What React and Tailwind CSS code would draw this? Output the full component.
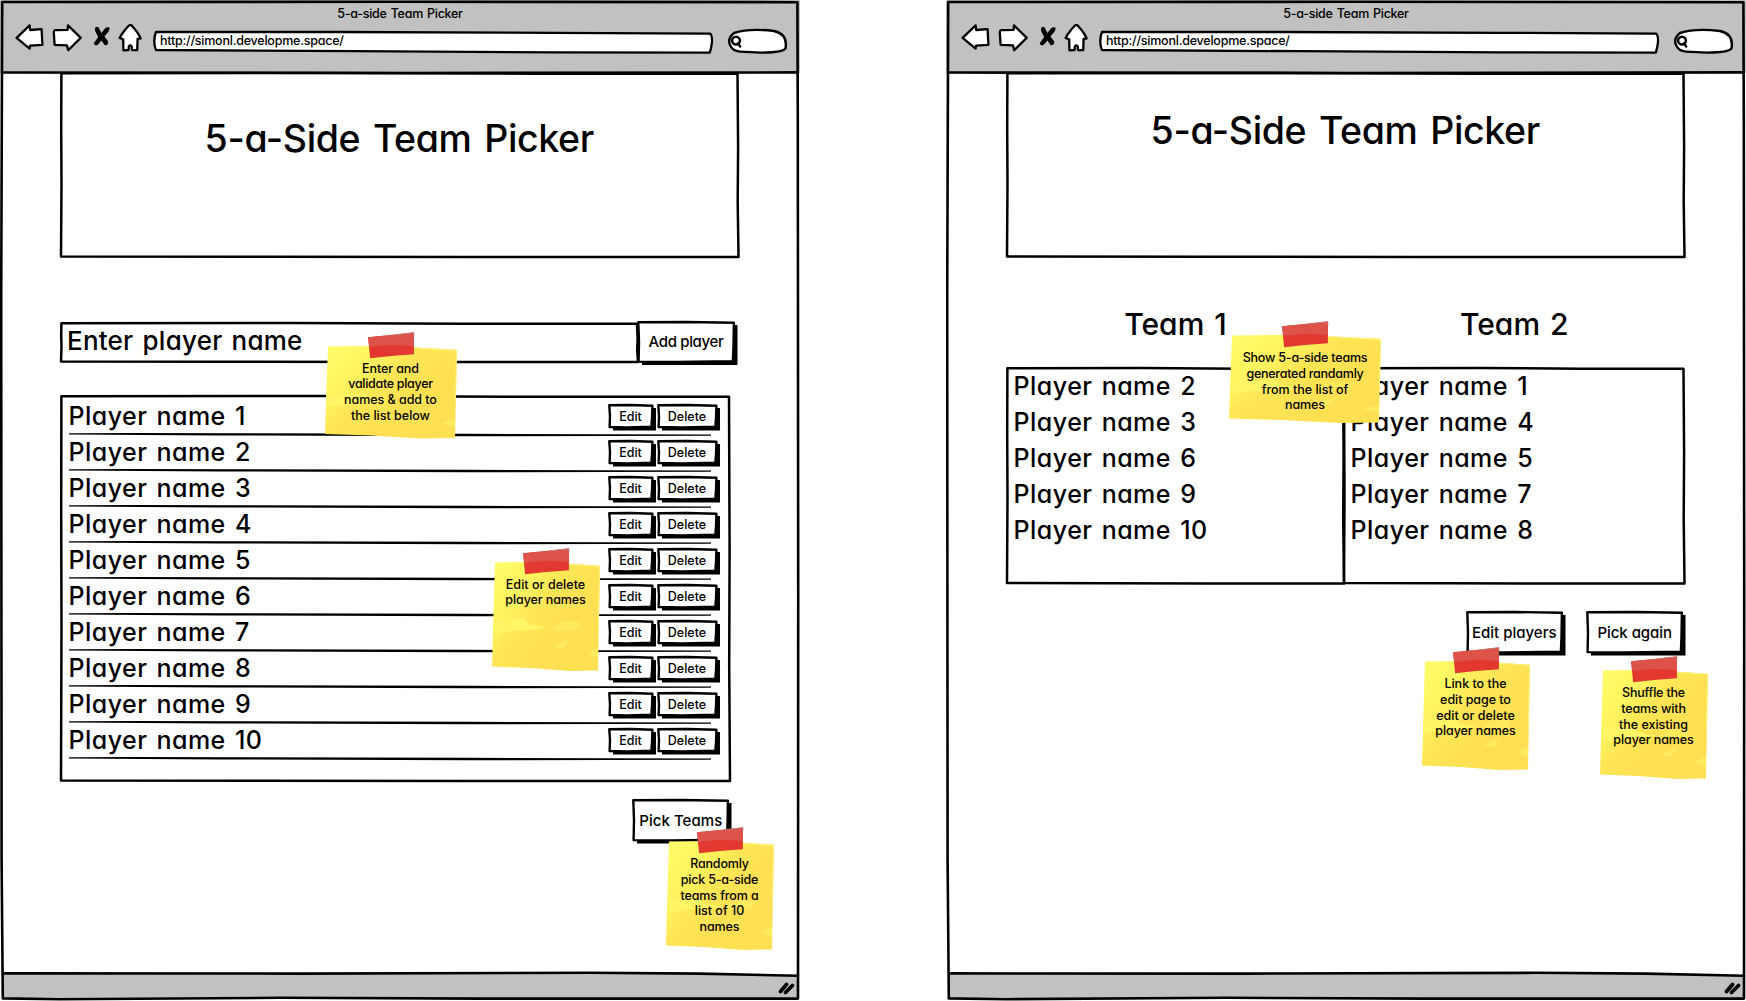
const ink = { fill: "none", stroke: "#000", strokeLinejoin: "round", strokeLinecap: "round" };

/* Hand-drawn frame: four slightly wavering strokes around its parent. */
function Sketch({ w, h, fill = "none", sw = 2.5 }) {
  return (
    <svg className="pointer-events-none absolute inset-0 overflow-visible" width={w} height={h} aria-hidden="true">
      <path
        {...ink}
        fill={fill}
        strokeWidth={sw}
        d={`M0.4 0.2 L${w * 0.4} 0 L${w * 0.7} 0.7 L${w - 1} 0.7 L${w - 0.4} ${h * 0.4} L${w - 0.8} ${h * 0.7} L${w} ${h} L${w * 0.6} ${h} L${w * 0.3} ${h - 0.2} L0 ${h - 0.6} L0.5 ${h * 0.6} L0.2 ${h * 0.3} Z`}
      />
    </svg>
  );
}

function Button({ children, w, h, dx = 3, dy = 3, className }) {
  return (
    <button className={`relative shrink-0 whitespace-nowrap text-center font-medium ${className}`}>
      <svg className="absolute inset-0 overflow-visible" width={w} height={h} aria-hidden="true">
        <path d={`M${dx + 1} ${dy} H${w + dx} V${h + dy} H${dx + 1} Z`} fill="#000" />
        <path
          d={`M0.3 0.3 L${w * 0.5} 0 L${w - 0.6} 0.8 L${w - 1} ${h * 0.6} L${w - 1.6} ${h - 0.8} L${w * 0.4} ${h} L0.6 ${h - 0.4} L1 ${h * 0.5} Z`}
          fill="#fff"
          stroke="#000"
          strokeWidth="2.4"
          strokeLinejoin="round"
        />
      </svg>
      <span className="relative">{children}</span>
    </button>
  );
}

function Browser({ children }) {
  return (
    <section className="relative flex h-[1001px] w-[800px] shrink-0 flex-col">
      <header className="flex h-[73px] shrink-0 flex-col bg-[#c1c1c1] pt-[3.5px]">
        <div className="h-5 text-center text-[12.5px]/5 font-medium tracking-[-0.27px] [word-spacing:1px]">5-a-side Team Picker</div>
        <div className="flex h-[31px] items-start pl-[15px]">
          <svg width="30" height="30" viewBox="0 0 30 30">
            <path {...ink} fill="#fff" strokeWidth="2.3" d="M1.6 13.8 L14.6 1.4 L15.2 6 L26.6 5.2 L27.4 20.8 L15 21.6 L14.6 24.6 Z" />
          </svg>
          <svg width="32" height="30" viewBox="0 0 32 30" className="ml-[6px]">
            <path {...ink} fill="#fff" strokeWidth="2.3" d="M2.8 8.4 C2.8 6 4 6 6 6.2 L16.6 5.8 L17 1.4 L29.8 13.8 L17.2 26.2 L16 21.4 L3.6 20.8 Z" />
          </svg>
          <svg width="18" height="30" viewBox="0 0 18 30" className="ml-[10px]">
            <path fill="#000" d="M2.4 3.6 C4 2 6 3 6.6 5.6 L8.4 9 L12 4.6 C13.4 3 16 3 16.8 4 L15.6 7.4 L11.4 12.4 L15 17.2 C16 19.6 13.6 21.8 11.6 21 L8.4 16.6 L4.8 20.8 C3 22 1 21 .8 19.2 L5.2 13 L2.6 8 C1.8 6.4 1.8 4.6 2.4 3.6 Z" />
          </svg>
          <svg width="26" height="30" viewBox="0 0 26 30" className="ml-[7px]">
            <path {...ink} fill="#fff" strokeWidth="2.3" d="M12 0.8 C10 2 4 9 1.6 14 L5.2 15.4 L5.4 26.4 L10.6 26 L10.8 22.6 C11.4 20.8 13.4 21 13.8 22.8 L14 26 L19.2 26.2 L19.6 15 L22.6 14.4 C21 10 16 4 13.4 1.2 Z" />
          </svg>
          <div className="relative ml-[10px] mt-[7px] h-5 w-[559px] pl-[6px] text-[12.5px]/[19px] font-medium tracking-[-0.23px]">
            <svg className="absolute inset-0 overflow-visible" width="559" height="20" aria-hidden="true">
              <path {...ink} fill="#fff" strokeWidth="2.3" d="M2 1 L180 1 L400 1.8 L556.4 2.6 C559 6 558 14 555.8 21.6 L400 21.4 L200 20.2 L2 19 C-.4 14 -.2 6 2 1 Z" />
            </svg>
            <span className="relative">http://simonl.developme.space/</span>
          </div>
          <svg width="62" height="30" viewBox="0 0 62 30" className="ml-[12.5px] mt-[3px]">
            <path {...ink} fill="#fff" strokeWidth="2.4" d="M8 6 C20 2 36 2.6 48 4 C57 6 61 12 59.6 21 C58 25 44 25.6 35 25.6 L14 24.6 C4 24 -1 13 8 6 Z" />
            <circle cx="10" cy="13.6" r="3.9" fill="none" stroke="#000" strokeWidth="2.5" />
            <path {...ink} strokeWidth="2.5" d="M12 16.4 L14.2 19.4" />
          </svg>
        </div>
      </header>
      <main className="ml-[61px] flex w-[677.5px] grow flex-col self-start">{children}</main>
      <svg className="pointer-events-none absolute inset-0" width="800" height="1001" aria-hidden="true">
        <path d="M3 973.4 L300 973 L590 972.8 L700 973.5 L798 975.8 V998.5 H3 Z" fill="#c1c1c1" />
        <path {...ink} strokeWidth="2.6" d="M2.2 2 L400 1.8 L797.4 2.2 L797.8 120 L798.2 600 L798 998.6 L480 998.6 L280 997.8 L60 999.2 L2.8 998.4 L1.6 860 L1.2 300 Z" />
        <path {...ink} strokeWidth="2.6" d="M3 72.5 L400 73 L797 72.4" />
        <path {...ink} strokeWidth="2.6" d="M3 973.4 L300 973.6 L590 972.8 L700 973.6 L798 975.8" />
        <path {...ink} strokeWidth="3.8" d="M780.5 991.5 L786.5 984.5 M785.5 992.5 L792.5 985.5" />
      </svg>
    </section>
  );
}

function Banner({ className }) {
  return (
    <div className={`relative h-[184px] w-[677.5px] shrink-0 text-center text-[37.5px]/[48px] font-[450] tracking-[-0.35px] [word-spacing:3px] ${className}`}>
      <Sketch w={677.5} h={184} />
      <h1 className="-ml-px">5-a-Side Team Picker</h1>
    </div>
  );
}

/* Yellow paper note held by a strip of red tape. */
function Note({ id, w, h, lines, className }) {
  const c = w / 2 + 0.1;
  return (
    <aside className={`absolute pt-[15px] text-center text-[12.5px]/[15.75px] font-medium ${className}`}>
      <svg className="absolute inset-0 overflow-visible" width={w} height={h} aria-hidden="true">
        <defs>
          <linearGradient id={id} x1="0" y1="0" x2="0.75" y2="0.6">
            <stop offset="0" stopColor="#fffd68" />
            <stop offset="0.35" stopColor="#fff661" />
            <stop offset="0.6" stopColor="#ffe655" />
            <stop offset="1" stopColor="#ffe052" />
          </linearGradient>
        </defs>
        <path d={`M3 0.4 L${w * 0.35} 0 L${w * 0.7} 1.6 L${w} 3.8 L${w - 1} ${h * 0.5} L${w - 2} ${h - 0.6} L${w * 0.72} ${h} L${w * 0.35} ${h - 3} L0 ${h - 4.4} L1.4 ${h * 0.5} Z`} fill={`url(#${id})`} />
        <path d={`M1 ${h * 0.66} L${w * 0.2} ${h * 0.63} L${w * 0.42} ${h * 0.62} L${w * 0.52} ${h * 0.6} L${w * 0.34} ${h * 0.57} L${w * 0.3} ${h * 0.51} L${w * 0.1} ${h * 0.53} L1.6 ${h * 0.5} Z`} fill="#fff565" />
        <path d={`M${w * 0.56} ${h * 0.6} L${w * 0.68} ${h * 0.54} L${w * 0.82} ${h * 0.55} L${w * 0.8} ${h * 0.62} L${w * 0.62} ${h * 0.63} Z`} fill="#fff062" opacity="0.6" />
        <path d={`M${w * 0.56} ${h * 0.78} L${w * 0.72} ${h * 0.7} L${w * 0.66} ${h * 0.79} Z M${w * 0.88} ${h * 0.84} L${w - 2} ${h * 0.79} L${w - 2} ${h * 0.88} Z`} fill="#ffef62" opacity="0.7" />
        <path d={`M${w * 0.7} 2.2 L${w - 0.6} 4.4 L${w - 1.6} ${h * 0.6}`} fill="none" stroke="#fff27a" />
        <path d={`M${c - 23} -8.8 L${c} -11 L${c + 22.8} -13.6 L${c + 22.8} 8.2 L${c} 10 L${c - 21} 12.2 Z`} fill="#e2382f" />
        <path d={`M${c - 23} -8.8 L${c} -11 L${c + 22.8} -13.6 L${c + 22.8} 0 L${c} -1.2 L${c - 22} 1 Z`} fill="#dd5249" />
        <path d={`M${c + 4} -11.2 L${c + 22.8} -13.4 V-10`} fill="none" stroke="#b98783" strokeWidth="0.8" />
      </svg>
      <div className="relative">
        {lines.map(([text, spacing]) => (
          <p key={text} className={`whitespace-nowrap ${spacing}`}>{text}</p>
        ))}
      </div>
    </aside>
  );
}

function PlayerRow({ n }) {
  return (
    <li className="relative flex h-9 w-[651px] shrink-0 items-start">
      <span className="w-[540px] text-[25px]/[35px] font-[450] tracking-[0.47px] [word-spacing:2px]">Player name {n}</span>
      <Button w={44} h={22.4} className="mt-[6.6px] h-[22.4px] w-[44px] text-[12.5px]/[24px] tracking-[-0.1px]">Edit</Button>
      <Button w={59} h={22.4} className="ml-[5px] mt-[6.6px] h-[22.4px] w-[59px] text-[12.5px]/[24px]">Delete</Button>
      <svg className="absolute -bottom-px left-0 overflow-visible" width="642" height="3" aria-hidden="true">
        <path d="M0 .2 L60 0 L400 .8 L642 1.4 L642 2.8 L400 3.2 L150 2.5 L0 1.4 Z" fill="#000" />
      </svg>
    </li>
  );
}

function Team({ name, players, w, className }) {
  return (
    <div className={className}>
      <h2 className="h-[61.5px] text-center text-[30px]/[34px] font-[450] [word-spacing:2px]">{name}</h2>
      <div className="relative h-[215.5px] pl-[6.5px]">
        <Sketch w={w} h={215.5} />
        <ul>
          {players.map((n) => (
            <li key={n} className="h-9 text-[25px]/[36px] font-[450] tracking-[0.49px] [word-spacing:2px]">Player name {n}</li>
          ))}
        </ul>
      </div>
    </div>
  );
}

export default function App() {
  return (
    <div className='flex h-[1001px] w-[1746px] gap-[146px] overflow-hidden bg-white font-["Inter",sans-serif] text-black [font-feature-settings:"cv11"]'>
      <Browser>
        <Banner className="pt-[42px]" />
        <div className="mt-[65.5px] flex h-[39px]">
          <div className="relative w-[577px] pl-[6px] text-[26px]/[36px] font-[450] tracking-[0.23px] [word-spacing:2px]">
            <Sketch w={577} h={39} />
            Enter player name
          </div>
          <Button w={96.5} h={40} className="-mt-px h-10 w-[96px] text-[15px]/[39px] tracking-[-0.35px]">Add player</Button>
        </div>
        <ul className="relative mt-[34.5px] flex h-[385px] w-[669px] flex-col pl-[7.5px] pt-[2.6px]">
          <Sketch w={669} h={385} />
          {[1, 2, 3, 4, 5, 6, 7, 8, 9, 10].map((n) => (
            <PlayerRow key={n} n={n} />
          ))}
        </ul>
        <div className="mt-[18.5px] flex pl-[572px]">
          <Button w={95.5} h={40.5} className="h-[40.5px] w-[95.5px] text-[15px]/[41px] tracking-[0.05px]">Pick Teams</Button>
        </div>
        <Note id="n1" w={132} h={92.5} className="left-[324.5px] top-[345.5px] w-[132px]" lines={[
          ["Enter and", "tracking-[-0.1px]"], ["validate player", "tracking-[-0.3px]"], ["names & add to", "tracking-[-0.05px]"], ["the list below", "tracking-[0px]"]]} />
        <Note id="n2" w={108} h={109} className="left-[491.5px] top-[561.5px] w-[108px]" lines={[
          ["Edit or delete", "tracking-[0.05px]"], ["player names", "tracking-[-0.1px]"]]} />
        <Note id="n3" w={108} h={109} className="left-[665.5px] top-[841px] w-[108px]" lines={[
          ["Randomly", "tracking-[-0.2px]"], ["pick 5-a-side", "tracking-[-0.2px]"], ["teams from a", "tracking-[-0.1px]"], ["list of 10", "tracking-[0px]"], ["names", "tracking-[-0.1px]"]]} />
      </Browser>
      <Browser>
        <Banner className="pt-[34px]" />
        <div className="mt-[49.5px] flex">
          <Team name="Team 1" players={[2, 3, 6, 9, 10]} w={337} className="w-[337.5px]" />
          <Team name="Team 2" players={[1, 4, 5, 7, 8]} w={340.5} className="w-[341px]" />
        </div>
        <div className="mt-[28.5px] flex gap-[25px] pl-[459.5px]">
          <Button w={95.5} h={40.5} className="h-[40.5px] w-[95.5px] text-[15px]/[41px]">Edit players</Button>
          <Button w={95.5} h={40.5} className="h-[40.5px] w-[95.5px] text-[15px]/[41px] tracking-[-0.05px]">Pick again</Button>
        </div>
        <Note id="n4" w={152} h={88} className="left-[283px] top-[335px] w-[152px]" lines={[
          ["Show 5-a-side teams", "tracking-[-0.2px]"], ["generated randamly", "tracking-[-0.25px]"], ["from the list of", "tracking-[0px]"], ["names", "tracking-[-0.1px]"]]} />
        <Note id="n5" w={108} h={109} className="left-[475.5px] top-[661px] w-[108px]" lines={[
          ["Link to the", "tracking-[0px]"], ["edit page to", "tracking-[-0.05px]"], ["edit or delete", "tracking-[0px]"], ["player names", "tracking-[-0.1px]"]]} />
        <Note id="n6" w={108} h={109} className="left-[653.5px] top-[670px] w-[108px]" lines={[
          ["Shuffle the", "tracking-[-0.2px]"], ["teams with", "tracking-[-0.1px]"], ["the existing", "tracking-[0px]"], ["player names", "tracking-[-0.1px]"]]} />
      </Browser>
    </div>
  );
}
